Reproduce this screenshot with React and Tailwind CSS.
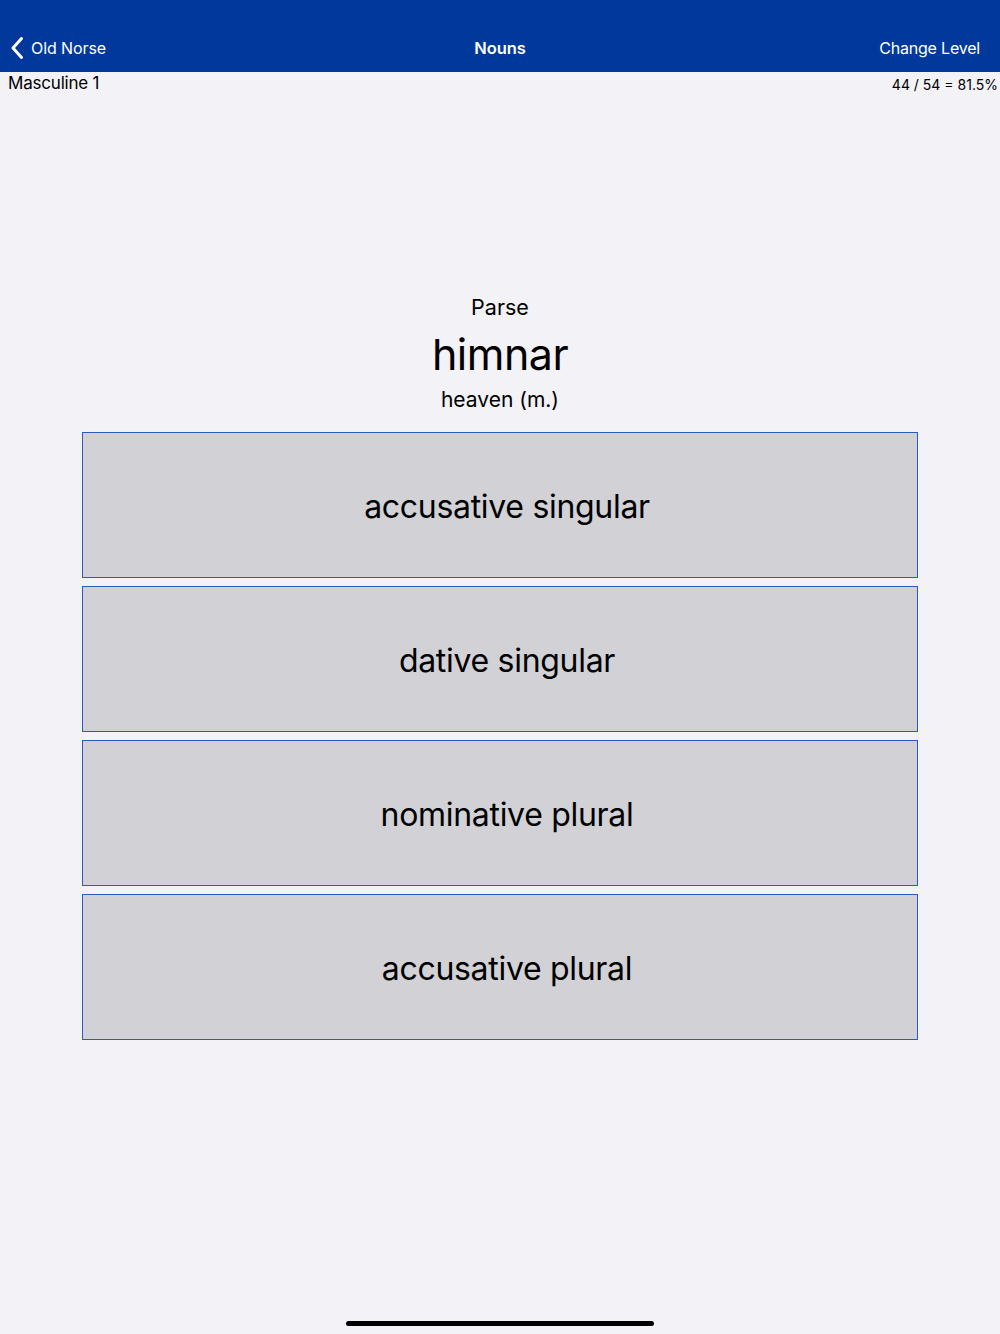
export default function App() {
  const options = [
    'accusative singular',
    'dative singular',
    'nominative plural',
    'accusative plural',
  ];

  return (
    <div
      className="w-[1000px] h-[1334px] bg-[#f2f2f7] flex flex-col text-black"
      style={{ fontFamily: 'Inter, "Noto Sans", sans-serif' }}
    >
      {/* Nav bar */}
      <div className="h-[72px] bg-[#00399b] flex items-end pb-[13px] px-[10px] text-white text-[16px] leading-[22px]">
        <div className="flex-1 flex items-center gap-[6px]">
          <svg width="15" height="22" viewBox="0 0 15 22" fill="none">
            <path d="M11.5 1.5 L3 11 L11.5 20.5" stroke="white" strokeWidth="3" strokeLinecap="round" strokeLinejoin="round" />
          </svg>
          <span className="tracking-[-0.1px]">Old Norse</span>
        </div>
        <div className="font-semibold text-[16.5px] tracking-[-0.1px]">Nouns</div>
        <div className="flex-1 text-right tracking-[-0.2px]">
          <span className="pr-[10px]">Change Level</span>
        </div>
      </div>

      {/* Level + score */}
      <div className="flex justify-between items-center pl-[8px] pr-[2px] h-[22px] pt-[2px]">
        <span className="text-[17px] tracking-[-0.2px]">Masculine 1</span>
        <span className="text-[14px]">44 / 54 = 81.5%</span>
      </div>

      {/* Prompt */}
      <div className="flex flex-col items-center mt-[200px]">
        <div className="text-[21.5px] leading-[26px]">Parse</div>
        <div className="text-[43px] leading-[52px] mt-[8px] tracking-[-0.5px]">himnar</div>
        <div className="text-[21px] leading-[26px] mt-[7px]">heaven (m.)</div>
      </div>

      {/* Options */}
      <div className="flex flex-col gap-[8px] mx-[82px] mt-[19px]">
        {options.map((o) => (
          <button
            key={o}
            className="h-[146px] bg-[#d1d1d6] border border-[#2a5bbf] flex items-center justify-center pl-[14px] pt-[3px] text-[32px] tracking-[-0.3px]"
          >
            {o}
          </button>
        ))}
      </div>

      <div className="flex-1" />
      {/* Home indicator */}
      <div className="flex justify-center pb-[8px]">
        <div className="w-[308px] h-[5px] rounded-full bg-black" />
      </div>
    </div>
  );
}
